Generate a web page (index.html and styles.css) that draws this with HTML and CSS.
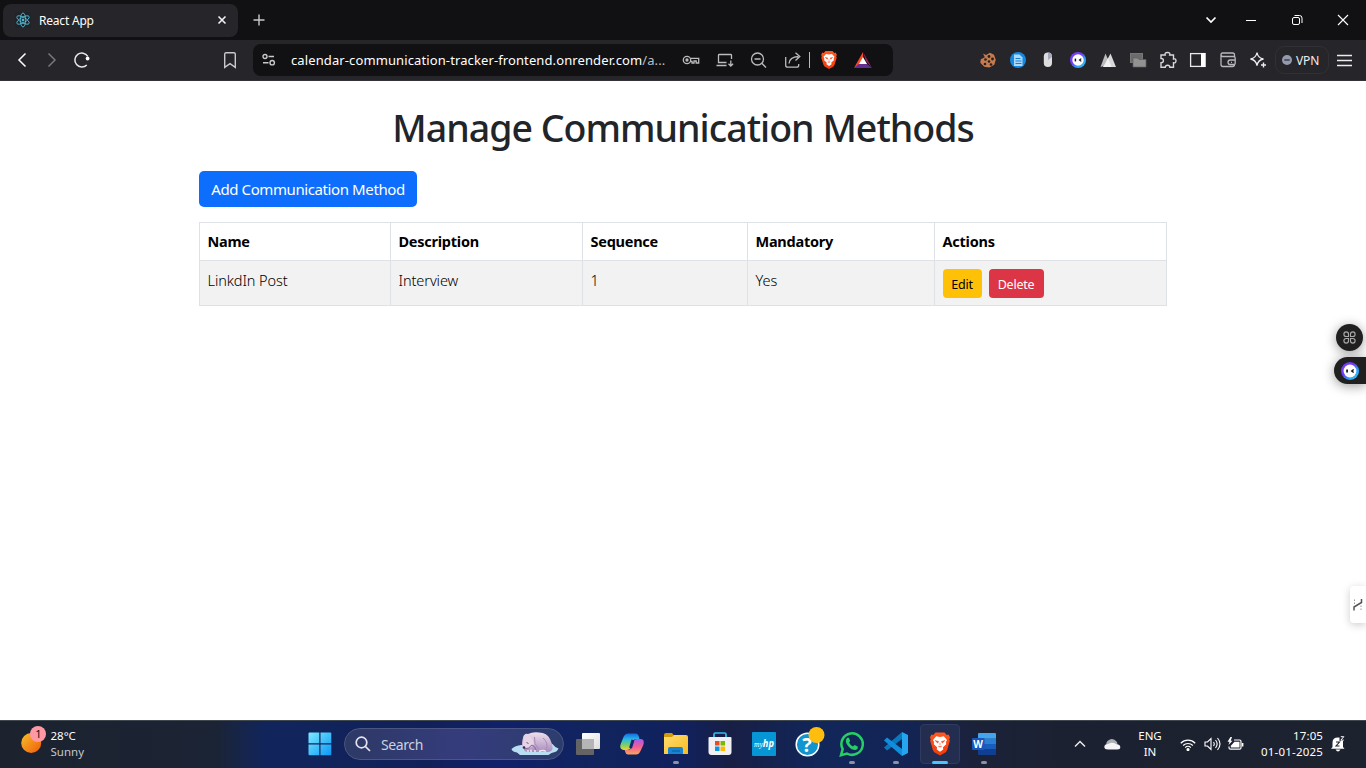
FILE: index.html
```html
<!DOCTYPE html>
<html lang="en">
<head>
<meta charset="utf-8">
<title>React App</title>
<link rel="stylesheet" href="styles.css">
</head>
<body>
<svg class="defs" width="0" height="0" aria-hidden="true">
  <defs>
    <linearGradient id="ring" x1="0" y1="0" x2="1" y2="1"><stop offset="0" stop-color="#6a4dff"/><stop offset=".4" stop-color="#7a35f4"/><stop offset=".65" stop-color="#2c9bf7"/><stop offset="1" stop-color="#3ad1ff"/></linearGradient>
    <linearGradient id="lion" x1="0" y1="0" x2="0" y2="1"><stop offset="0" stop-color="#ff5a1f"/><stop offset="1" stop-color="#f23a0c"/></linearGradient>
    <symbol id="bot" viewBox="0 0 16 16"><circle cx="8" cy="8" r="8" fill="url(#ring)"/><circle cx="8" cy="8" r="5.7" fill="#fff"/><path d="M5.4 6.6v2.8" stroke="#111" stroke-width="1.5"/><path d="M11.3 6.6 9.5 8l1.8 1.4" fill="none" stroke="#111" stroke-width="1.2"/></symbol>
    <symbol id="brave" viewBox="0 0 20 23"><path d="M5.5 0h9l2.2 2.4 1.8-.4L20 4.7l-.7 2 .5 1.8-2.7 9.2-1.4 2L10 23l-5.700-3.300-1.400-2L.2 8.500l.5-1.800-.7-2L1.500 2l1.800.4z" fill="url(#lion)"/><path d="M6.200 3.800 10 4.500l3.800-.7 3.200 3.700-1 2.100.2 2.200-3.200 3 .2 2.200L10 19.300 6.800 17l.2-2.200-3.200-3L4 9.600 3 7.500z" fill="#fff"/><path d="M5.300 8.200l3.200.8-.8 1.500zM14.700 8.200l-3.200.8.8 1.500zM10 10.300v2.500M8.200 13.700 10 14.600l1.800-.9" fill="#f8481a" stroke="#f8481a" stroke-width=".6"/></symbol>
  </defs>
</svg>

<header class="tabstrip">
  <div class="tab">
    <svg class="tab-icon" width="16" height="16" viewBox="0 0 16 16" fill="none" stroke="#58c4dc" stroke-width=".8"><rect width="16" height="16" rx="1" fill="#20232a" stroke="none"/><g transform="rotate(90 8 8)"><ellipse cx="8" cy="8" rx="7" ry="2.700"/><ellipse cx="8" cy="8" rx="7" ry="2.700" transform="rotate(60 8 8)"/><ellipse cx="8" cy="8" rx="7" ry="2.700" transform="rotate(120 8 8)"/></g><circle cx="8" cy="8" r="1" fill="#58c4dc"/></svg>
    <span class="tab-title">React App</span>
    <svg width="10" height="10" viewBox="0 0 10 10"><path d="M1.500 1.500l7 7M8.500 1.500l-7 7" stroke="#f2f2f2" stroke-width="1.600"/></svg>
  </div>
  <svg class="new-tab" width="12" height="12" viewBox="0 0 12 12"><path d="M6 .5v11M.5 6h11" stroke="#c8c8ca" stroke-width="1.400"/></svg>
  <div class="win-controls">
    <svg width="46" height="40" viewBox="0 0 46 40" fill="none" stroke="#fff"><path d="M18.500 17.500 23 22l4.500-4.500" stroke-width="1.700"/></svg>
    <svg width="46" height="40" viewBox="0 0 46 40"><path d="M13 20.500h10" stroke="#fff"/></svg>
    <svg width="46" height="40" viewBox="0 0 46 40" fill="none" stroke="#fff"><rect x="13.500" y="17.500" width="7" height="7" rx="1.500"/><path d="M15.500 15.500h5a2.500 2.500 0 0 1 2.500 2.500v5"/></svg>
    <svg width="46" height="40" viewBox="0 0 46 40"><path d="M13 15l10 10M23 15 13 25" stroke="#fff" stroke-width="1.100"/></svg>
  </div>
</header>

<nav class="toolbar">
  <div class="icons">
    <svg viewBox="0 0 30 30"><path d="M18.500 8.500 12 15l6.500 6.500" stroke="#fff" stroke-width="1.500"/></svg>
    <svg viewBox="0 0 30 30"><path d="M11.500 8.500 18 15l-6.500 6.500" stroke="#77777b" stroke-width="1.500"/></svg>
    <svg viewBox="0 0 30 30"><path d="M20.800 11.300A7 7 0 1 0 19.800 20" stroke="#e8e8ea" stroke-width="1.500"/><circle cx="20.600" cy="13.500" r="1.900" fill="#fff"/></svg>
  </div>
  <svg class="bookmark" width="30" height="30" viewBox="0 0 30 30"><path d="M9.700 9.200q0-1.500 1.500-1.500h7.600q1.500 0 1.500 1.500v13.200L15 18.700l-5.300 3.700z" stroke="#c9c9cc" stroke-width="1.400" fill="none"/></svg>
  <div class="address">
    <svg class="site" width="14" height="14" viewBox="0 0 14 14" fill="none" stroke="#c9c9cc" stroke-width="1.400"><circle cx="3" cy="3.500" r="2"/><path d="M6.500 3.500H12M1 9.700h5.500"/><circle cx="10.200" cy="9.700" r="2.200"/></svg>
    <span class="url">calendar-communication-tracker-frontend.onrender.com<span class="path">/a...</span></span>
    <div class="address-icons">
      <svg viewBox="0 0 34 32"><circle cx="13" cy="16" r="3.700"/><circle cx="13" cy="16" r="1" fill="#bbb"/><path d="M16.700 14.300h8v4.700h-2.500v-2h-2.200v2h-2v-1.700h-1.500"/></svg>
      <svg viewBox="0 0 34 32"><path d="M23.500 15v-3.700q0-.8-.8-.8H11.300q-.8 0-.8.800V18.500h8M8.500 21.500h10M22.800 16.500v5.500M20.500 19.700l2.300 2.300 2.300-2.300"/></svg>
      <svg viewBox="0 0 34 32"><circle cx="15.500" cy="15" r="6"/><path d="m19.800 19.300 4.200 4.200M12.500 15h6"/></svg>
      <svg viewBox="0 0 34 32"><path d="M9.700 13v8.200q0 2 2 2h9q2 0 2-2V20M13 19.500q.5-6.500 9.500-7M19.500 8.700l4.300 3.800-4.300 3.900"/></svg>
    </div>
    <i class="divider"></i>
    <svg class="shield" width="16" height="18"><use href="#brave"/></svg>
    <svg class="bat" width="18" height="16" viewBox="0 0 18 16"><path d="M9 0 0 16l9-6z" fill="#ff4724"/><path d="m9 0 9 16-6-7z" fill="#9e1f63"/><path d="m0 16 6-5h6l6 5z" fill="#662d91"/><path d="m9 5 4 7H5z" fill="#fff"/></svg>
  </div>
  <div class="icons extensions">
    <svg viewBox="0 0 30 30"><path d="M10 8.500 13 10l4-2.200 4 2 1.800 5-1.500 5-5 2.700-5-.7-4-4 .5-3.500 4-2z" fill="#c47b50"/><g fill="#26201f"><circle cx="16" cy="11.500" r="1.400"/><circle cx="12.500" cy="14.500" r="1.300"/><circle cx="19.500" cy="14" r="1.400"/><circle cx="16" cy="16.500" r="1.300"/><circle cx="12" cy="19" r="1.300"/><circle cx="18" cy="19.500" r="1.300"/></g></svg>
    <svg viewBox="0 0 30 30"><circle cx="15" cy="15" r="8" fill="#1688e0"/><path d="M11 9.500h5.500l3 3V21H11z" fill="#acd8fb"/><path d="M12.500 13.500h5M12.500 16h6M12.500 18.500h6" stroke="#1680d0"/></svg>
    <svg viewBox="0 0 30 30"><rect x="10.800" y="7.500" width="8.200" height="14.500" rx="4.100" fill="#ddd"/><path d="M15 7.500a4.100 4.100 0 0 1 4 4.500L15 15z" fill="#a6a9bc"/></svg>
    <svg viewBox="0 0 30 30"><use href="#bot" x="7" y="7" width="16" height="16"/></svg>
    <svg viewBox="0 0 30 30"><path d="M7.500 22 12.500 8.500 17 19z" fill="#bbb"/><path d="m12.500 18 5-9.500L23 22H10z" fill="#d8d8d8"/><path d="m12 19 3-6 3.500 9H10z" fill="#f1f1f1"/></svg>
    <svg viewBox="0 0 30 30"><rect x="7.500" y="8.500" width="12" height="9" fill="#6b6b6b" stroke="#777"/><path d="M10 13h4.500l1.500 1.500h7V22H10z" fill="#929292" stroke="#5e5e5e" stroke-width=".7"/></svg>
    <svg viewBox="0 0 30 30"><path d="M8 10h4.200q-.8-2.500 2.300-2.500T16.700 10h3.800v4q2.500-.6 2.500 1.800t-2.500 2v4.400h-3.700q0-2-2.200-2t-2.300 2H8v-4.500q2.400 0 2.400-2.200T8 13.500z" stroke="#d7d7d9" stroke-width="1.400"/></svg>
    <svg viewBox="0 0 30 30"><rect x="7.600" y="8.600" width="14.300" height="12.800" stroke="#e9e9eb" stroke-width="1.300"/><path d="M18 8h4.500v14H18z" fill="#fff"/></svg>
    <svg viewBox="0 0 30 30"><path d="M21.500 12V9.700Q21.500 8 19.700 8H9.500Q8 8 8 9.500v10q0 2 2 2h9.500q2 0 2-2M8 9.500q0 2 2 2h10.500q1.700 0 1.700 1.700v5q0 1.300-1.300 1.300h-3.700q-2.200 0-2.200-2.200T17.200 15H22M18 17.300h1" stroke="#b9b9bc" stroke-width="1.300"/></svg>
    <svg viewBox="0 0 30 30"><path d="M14 7.500q.9 5.700 6.500 6.500-5.600 1-6.500 6.700-1-5.700-6.500-6.700 5.500-.8 6.500-6.500z" stroke="#ececee" stroke-width="1.300"/><path d="M20.500 17.500v5M18 20h5" stroke="#ececee" stroke-width="1.400"/></svg>
  </div>
  <div class="vpn"><svg width="10" height="10" viewBox="0 0 10 10"><circle cx="5" cy="5" r="5" fill="#9499ad"/><path d="M2.300 5h5.400" stroke="#30313b" stroke-width="1.300"/></svg><span>VPN</span></div>
  <svg class="menu" width="15" height="13" viewBox="0 0 15 13"><path d="M0 1.500h15M0 6.500h15M0 11.500h15" stroke="#ececee" stroke-width="1.300"/></svg>
</nav>

<main class="page">
  <div class="container">
    <h1><span>Manage Communication Methods</span></h1>
    <button class="btn primary">Add Communication Method</button>
    <table>
      <colgroup><col class="c1"><col class="c2"><col class="c3"><col class="c4"><col></colgroup>
      <thead><tr><th>Name</th><th>Description</th><th>Sequence</th><th>Mandatory</th><th>Actions</th></tr></thead>
      <tbody><tr><td>LinkdIn Post</td><td>Interview</td><td>1</td><td>Yes</td><td class="action-cell"><div class="actions"><button class="btn small warning">Edit</button><button class="btn small danger">Delete</button></div></td></tr></tbody>
    </table>
  </div>
  <div class="float-grid"><svg width="13" height="13" viewBox="0 0 13 13" fill="none" stroke="#aaa" stroke-width="1.100"><path d="M5.500 5.500H3.200A2.300 2.300 0 1 1 5.500 3.200zM7.500 5.500V3.200a2.300 2.300 0 1 1 2.300 2.300zM5.500 7.500v2.300a2.300 2.300 0 1 1-2.300-2.300zM7.500 7.500h2.300a2.300 2.300 0 1 1-2.300 2.300z"/></svg></div>
  <div class="float-bot"><svg width="18" height="18"><use href="#bot"/></svg></div>
  <div class="float-side"><svg width="10" height="14" viewBox="0 0 10 14" fill="none" stroke="#555"><path d="M1 12.500V9l7.500-4.500V1" stroke-width="1.500"/><path d="M1.500 1.500v5M8 7.500v5" stroke="#999" stroke-dasharray="1.500 1.500"/></svg></div>
</main>

<footer class="taskbar">
  <div class="weather">
    <svg width="26" height="30" viewBox="0 0 26 30"><defs><linearGradient id="sun" x1="0" y1="0" x2="1" y2="1"><stop offset="0" stop-color="#f8c12c"/><stop offset="1" stop-color="#f05a08"/></linearGradient></defs><circle cx="10.200" cy="17" r="10" fill="url(#sun)"/><circle cx="17" cy="8" r="8" fill="#ff99a4"/><text x="17.500" y="12" text-anchor="middle" class="badge-text">1</text></svg>
    <div class="two-lines"><span>28°C</span><span class="dim">Sunny</span></div>
  </div>
  <svg class="start" width="24" height="24" viewBox="0 0 24 24"><defs><linearGradient id="win" x1="0" y1="0" x2="1" y2="1"><stop stop-color="#7deaff"/><stop offset="1" stop-color="#0a97f5"/></linearGradient></defs><path d="M1.500.5H11.300V11.300H.5V1.500q0-1 1-1zM12.500.5h9.800q1 0 1 1v9.800H12.500zM.5 12.500H11.300v10.800H1.500q-1 0-1-1zM12.500 12.500h10.800v9.800q0 1-1 1h-9.800z" fill="url(#win)"/></svg>
  <div class="search">
    <svg width="16" height="16" viewBox="0 0 16 16" fill="none" stroke="#e3e4ee" stroke-width="1.700"><circle cx="6.500" cy="6.500" r="5.300"/><path d="m10.300 10.300 4.700 4.700"/></svg>
    <span>Search</span>
    <svg class="bear" width="48" height="24" viewBox="0 0 48 24"><defs><linearGradient id="fur" x1="0" y1="0" x2="0" y2="1"><stop stop-color="#f0dfec"/><stop offset="1" stop-color="#a98dbd"/></linearGradient></defs><path d="M.5 17q3.500-3.500 10-4l31-1q2 3 6 4.500-1 3.500-7 4.500l-3 2H9l-3-2.500q-5-1-5.500-3.500z" fill="#b8def4"/><path d="M12 6q0-2.500 1.500-3.300Q15 1 17 2 22-.3 28 .6q8 .4 11 6.400 3 6 2.500 10-1 3-5 3H16q-3-1-4-4-2-4 0-10z" fill="url(#fur)"/><path d="M13 5q4-2 7 0 3 3 3 7-2 4-7 4l-3 1.500q-2.500-.5-1.500-3.500z" fill="#e6d3e6"/><path d="M23.500 5q-1 7 4 12M32 6q6 5 3 12" stroke="#a78bbb" fill="none"/><path d="M13 17q5 0 8-4 3 1 4 5" stroke="#80689a" fill="none"/><circle cx="13" cy="15.500" r="1.300" fill="#312943"/><path d="m15.500 10.500 2 1" stroke="#66547a"/><path d="M17 20v-2M20 20v-2.500M24 20v-2M28 19.500q4-2 7 0" stroke="#f5e8f5" stroke-width="1.500" fill="none"/></svg>
  </div>
  <div class="apps">
    <div class="app"><svg width="24" height="24" viewBox="0 0 24 24"><defs><linearGradient id="tv" x1="0" y1="0" x2="1" y2="1"><stop stop-color="#fff"/><stop offset="1" stop-color="#ddd"/></linearGradient></defs><rect x="6" y="1" width="18" height="16" rx="1" fill="url(#tv)"/><rect x="0" y="7" width="18" height="16" rx="1" fill="#646464"/><path d="M6 7h12v10H6z" fill="#b5b5b7"/></svg></div>
    <div class="app"><svg width="24" height="24" viewBox="0 0 24 24"><defs><linearGradient id="cp1" x1="0" y1="0" x2="0" y2="1"><stop stop-color="#1668df"/><stop offset=".35" stop-color="#28b8e9"/><stop offset=".7" stop-color="#7bcf65"/><stop offset="1" stop-color="#f5d22c"/></linearGradient><linearGradient id="cp2" x1="0" y1="0" x2="0" y2="1"><stop stop-color="#a25bf0"/><stop offset=".5" stop-color="#f15e93"/><stop offset="1" stop-color="#ffa35c"/></linearGradient></defs><path d="M8 1.500h8q2 0 2.700 2.500l.7 3h-3q-3 0-4 3l-1.500 5Q10 18 7 18H3.500Q-1 17 .7 12L3.500 5Q5 1.500 8 1.500z" fill="url(#cp1)"/><path d="M16 22.500H8q-2 0-2.700-2.500l-.7-2h3q3 0 4-3l1.500-5q.9-3 3.900-3h3.500q4.500 0 2.800 6l-2.800 6q-1.500 3.500-4.500 3.500z" fill="url(#cp2)"/><path d="m13 8-2.500 8" stroke="#17266f" stroke-width="3"/></svg></div>
    <div class="app running"><svg width="26" height="24" viewBox="0 0 26 24"><defs><linearGradient id="fo" x1="0" y1="0" x2="1" y2="1"><stop stop-color="#ffdc70"/><stop offset="1" stop-color="#f8bb20"/></linearGradient></defs><path d="M1 7V3q0-2 2-2h6l2.500 3-2 3z" fill="#d39a0b"/><path d="M1 5h8l2-2h12q2 0 2 2v17H1z" fill="url(#fo)"/><path d="M5 22v-5q0-2 2-2h11q2 0 2 2v5z" fill="#1883cf"/><path d="M9 19h8" stroke="#095b9c"/></svg></div>
    <div class="app"><svg width="24" height="24" viewBox="0 0 24 24"><path d="M6 6V2.500Q6 1 7.500 1h9Q18 1 18 2.500V6" fill="none" stroke="#35bdf2" stroke-width="1.700"/><path d="M1.500 5h21q1 0 1 1v14q0 3-3 3h-17q-3 0-3-3V6q0-1 1-1z" fill="#f0f0f4"/><path d="M7 9h4.500v4.500H7z" fill="#ec4a23"/><path d="M12.500 9H17v4.500h-4.500z" fill="#7db900"/><path d="M7 14.500h4.500V19H7z" fill="#0998df"/><path d="M12.500 14.500H17V19h-4.500z" fill="#ffb902"/></svg></div>
    <div class="app"><svg width="24" height="24" viewBox="0 0 24 24"><rect width="24" height="24" rx="1" fill="#0796d5"/><text x="2" y="15" class="hp-text" textLength="20" lengthAdjust="spacingAndGlyphs">my<tspan class="hp-bold">hp</tspan></text></svg></div>
    <div class="app help"><svg width="30" height="30" viewBox="0 0 30 30"><circle cx="12.500" cy="17.500" r="11.300" fill="#1194cf" stroke="#fff" stroke-width="1.500"/><text x="12" y="25" text-anchor="middle" class="q-text">?</text><circle cx="21.500" cy="8" r="8" fill="#ffbd0d"/></svg></div>
    <div class="app running"><svg width="26" height="26" viewBox="0 0 26 26"><path d="M2 24.200 3.700 18.200A10.700 10.700 0 1 1 8 22.500z" fill="none" stroke="#25cf65" stroke-width="2.500"/><path d="M8 7q1-1 2 0l1 2.500q.3 1-1 2 1.500 3 4 4l1.500-1.500 3.200 1.500q.5 3-2.200 3.500-4 0-7-3.500-4.500-5-1.500-8.500z" fill="#25cf65"/></svg></div>
    <div class="app running"><svg width="24" height="24" viewBox="0 0 24 24"><path d="m18 0 6 3v18l-6 3z" fill="#24a5ed"/><path d="M18 0 0 15.500l3 3L18 7z" fill="#0879bf"/><path d="M18 24 0 8.500l3-3L18 17z" fill="#118edb"/></svg></div>
    <div class="app running active"><svg width="20" height="24"><use href="#brave"/></svg></div>
    <div class="app running"><svg width="24" height="22" viewBox="0 0 24 22"><path d="M7 0h16q1 0 1 1v4.700H6V1q0-1 1-1z" fill="#42a5ee"/><path d="M6 5.700h18V11H6z" fill="#2a7fd4"/><path d="M6 11h18v5.500H6z" fill="#185dbd"/><path d="M6 16.500h18V21q0 1-1 1H7q-1 0-1-1z" fill="#103f91"/><rect y="5" width="12.500" height="12" rx="1" fill="#1855bd"/><text x="6.200" y="15" text-anchor="middle" class="word-text">W</text></svg></div>
  </div>
  <div class="tray">
    <svg class="chev" width="12" height="8" viewBox="0 0 12 8"><path d="m1 6.500 5-5 5 5" stroke="#f1f1f1" stroke-width="1.400" fill="none"/></svg>
    <svg class="cloud" width="17" height="12" viewBox="0 0 17 12"><path d="M3 8a4 4 0 0 1 2-6q4-3 8 2l1 5z" fill="#aaaeb3"/><path d="M4 11.500q-3.500 0-3.700-2.500 0-3 4-3 4-2.500 8 .3 4 0 4 3 0 2.200-3 2.200z" fill="#f3f4f5"/></svg>
    <div class="two-lines lang"><span>ENG</span><span>IN</span></div>
    <svg class="wifi" width="16" height="13" viewBox="0 0 16 13" fill="none" stroke="#fff" stroke-width="1.200"><path d="M.8 5.200a10.200 10.200 0 0 1 14.400 0M3.100 7.500a7 7 0 0 1 9.800 0M5.200 9.600a4 4 0 0 1 5.600 0"/><circle cx="8" cy="11.500" r="1" fill="#fff"/></svg>
    <svg class="vol" width="17" height="14" viewBox="0 0 17 14" fill="none" stroke="#fff" stroke-width="1.100"><path d="M1 5h2.500L7 1.500v11L3.500 9H1zM9.500 5q1.500 2 0 4M11.500 3q3.300 4 0 8M13.500 1q5 6 0 12"/></svg>
    <svg class="batt" width="17" height="14" viewBox="0 0 17 14" fill="none" stroke="#fff" stroke-width="1.200"><path d="M7 3h5.500q1.500 0 1.500 1.500v6.200q0 1.500-1.500 1.500h-9Q2 12.200 2 10.700V9.500"/><path d="M7.500 4.800h5v5.700H3.800V8.800z" fill="#fff" stroke="none"/><path d="M15.600 6v3.500" stroke-width="1.600"/><path d="M3.500 0 .5 4.700h2L1.500 8 5.500 3.700H3.700L5 0z" fill="#fff" stroke="none"/></svg>
    <div class="two-lines clock"><span>17:05</span><span class="date">01-01-2025</span></div>
    <svg class="bell" width="14" height="16" viewBox="0 0 14 16"><path d="M1.500 11V6.500Q1.500 1.500 7 1.500h1.500v3.500H12v6l1.500 1.800H0z" fill="#fff"/><path d="M4.500 13.500h5q-2.500 4-5 0z" fill="#fff"/><path d="M5 6h3.500L5 10h3.500" fill="none" stroke="#1c222e" stroke-width="1.100"/><path d="M9.800.7h3l-3 3.500h3" fill="none" stroke="#fff"/></svg>
  </div>
</footer>
</body>
</html>
```
FILE: styles.css
```css
* { box-sizing: border-box; }
html, body { margin: 0; height: 768px; overflow: hidden; }
body { display: flex; flex-direction: column; width: 1366px; background: #fff; font-family: "Noto Sans", "Open Sans", sans-serif; }
svg { flex: none; display: block; }
.defs { position: absolute; }
span { white-space: nowrap; }

.tabstrip { height: 40px; flex: none; background: #111113; display: flex; align-items: center; padding-left: 3px; }
.tab { width: 235px; height: 33px; border-radius: 8px; background: #25252a; display: flex; align-items: center; padding: 0 11px 0 12px; color: #fff; font-size: 12px; }
.tab-icon { margin-right: 8px; }
.tab-title { flex: 1; letter-spacing: -.2px; }
.new-tab { margin-left: 15px; }
.win-controls { display: flex; margin-left: auto; margin-right: -5px; }
.win-controls svg:first-child { margin-right: -1px; }

.toolbar { height: 41px; flex: none; background: #25252a; border-bottom: 1px solid #323238; display: flex; align-items: center; padding-left: 7px; }
.icons { display: flex; }
.icons svg { width: 30px; height: 30px; fill: none; }
.bookmark { margin-left: 118px; }
.address { width: 640px; height: 32px; margin-left: 8px; border-radius: 8px; background: #111113; display: flex; align-items: center; padding-left: 9px; }
.url { width: 375px; margin-left: 15px; color: #fff; font-size: 13px; letter-spacing: .11px; }
.path { color: #bdbdc0; }
.address-icons { display: flex; margin-left: 8px; }
.address-icons svg { width: 34px; height: 32px; fill: none; stroke: #bbbbbd; stroke-width: 1.3; }
.divider { width: 1px; height: 16px; background: #bbb; margin: 0 11px 0 -1px; }
.bat { margin-left: 17px; }
.extensions { margin-left: 80px; }
.vpn { width: 54px; height: 28px; margin-left: 2px; border: 1px solid #303036; border-radius: 9px; display: flex; align-items: center; padding-left: 6px; gap: 4px; color: #eee; font-size: 12px; letter-spacing: -.1px; }
.menu { margin-left: 8px; }

.page { flex: 1; position: relative; }
.container { width: 968px; margin: 0 auto; padding-top: 24px; }
h1 { display: flex; justify-content: center; margin: 0; height: 47px; line-height: 46px; font-size: 37.500px; font-weight: 480; color: #212529; letter-spacing: -.980px; }
.btn { border: 0; font-family: inherit; white-space: nowrap; padding: 0; }
.primary { display: block; width: 218px; height: 36px; margin: 19px 0 15px; border-radius: 5px; background: #0d6efd; color: #fff; font-size: 15px; letter-spacing: -.4px; }
table { width: 968px; table-layout: fixed; border-collapse: collapse; font-size: 14.500px; color: #000; }
.c1 { width: 191px; } .c2 { width: 192px; } .c3 { width: 165px; } .c4 { width: 187px; }
th, td { border: 1px solid #dee2e6; padding: 0 8px 0 7.500px; text-align: left; }
th { height: 38px; letter-spacing: -.25px; font-weight: 700; padding-bottom: 2px; }
td { height: 45px; background: #f2f2f2; vertical-align: top; padding-top: 7px; line-height: 24px; letter-spacing: -.08px; font-weight: 350; }
.action-cell { padding-top: 8px; }
.actions { display: flex; gap: 7px; }
.small { height: 29px; border-radius: 4px; font-size: 12.500px; letter-spacing: -.25px; padding-top: 2px; }
.warning { width: 39px; background: #ffc107; color: #000; }
.danger { width: 55px; background: #dc3545; color: #fff; }

.float-grid, .float-bot, .float-side { position: absolute; display: flex; align-items: center; box-shadow: 0 2px 12px rgba(0,0,0,.4); }
.float-grid { right: 3px; top: 243px; width: 27px; height: 27px; border-radius: 50%; background: #202020; justify-content: center; }
.float-bot { right: 0; top: 276px; width: 32px; height: 27px; border-radius: 14px 0 0 14px; background: #202020; padding-left: 7px; }
.float-side { right: 0; top: 505px; width: 16px; height: 37px; border-radius: 4px 0 0 4px; background: #fff; padding-left: 3px; box-shadow: 0 2px 8px rgba(0,0,0,.2); }

.taskbar { height: 48px; flex: none; display: flex; align-items: center; padding-bottom: 1px; border-top: 1px solid #40484f; background: linear-gradient(90deg, #1c222e 0, #1b2435 215px, #11255c 265px, #12205a 430px, #10206b 500px, #11245d 600px, #10215f 680px, #181f45 730px, #11265a 820px, #132454 910px, #1b2138 980px, #1c2132 1060px, #1c222e 1366px); color: #fff; font-size: 11.500px; }
.weather { width: 306px; display: flex; padding-left: 21px; gap: 3.500px; align-items: center; }
.weather > svg { margin-top: -6px; }
.two-lines { display: flex; flex-direction: column; line-height: 16px; margin-top: -1px; }
.dim { color: #c4c7cb; }
.badge-text { font-size: 11px; fill: #111; }
.start { margin-left: 1.500px; }
.search { width: 220px; height: 32px; margin-left: 12.500px; border: 1px solid #4b5682; border-radius: 16px; background: linear-gradient(90deg, #2d3965, #353c7d 55%, #2c3d6c); display: flex; align-items: center; padding-left: 10px; font-size: 14px; color: #cdd0df; letter-spacing: -.4px; }
.search span { margin-left: 10px; flex: 1; }
.bear { margin-right: 4px; }
.apps { display: flex; margin-left: 2px; }
.app { width: 44px; height: 46px; display: flex; align-items: center; justify-content: center; position: relative; }
.help svg { margin: -5px 0 0 4px; }
.running::after { content: ""; position: absolute; bottom: 3px; left: 19px; width: 6px; height: 3px; border-radius: 2px; background: #8b90a3; }
.active::before { content: ""; position: absolute; inset: 3px 2px 3px 2px; border: 1px solid #303a5d; border-radius: 4px; background: #222d50; }
.active svg { position: relative; }
.active::after { left: 14px; width: 16px; background: #4cc2ff; }
.hp-text { font: italic 9px "Liberation Serif", serif; fill: #fff; }
.hp-bold { font: italic bold 11px "Noto Sans", sans-serif; }
.q-text { font: bold 20px "Noto Sans", sans-serif; fill: #fff; }
.word-text { font: bold 10px "Noto Sans", sans-serif; fill: #fff; }
.tray { display: flex; align-items: center; flex: 1; padding-left: 68px; }
.cloud { margin-left: 18px; }
.lang { width: 30px; margin-left: 14px; align-items: center; }
.wifi { margin-left: 15px; }
.vol { margin-left: 8px; }
.batt { margin-left: 6px; }
.clock { width: 79px; align-items: flex-end; letter-spacing: .1px; }
.date { letter-spacing: .2px; }
.bell { margin-left: 8px; }
```
